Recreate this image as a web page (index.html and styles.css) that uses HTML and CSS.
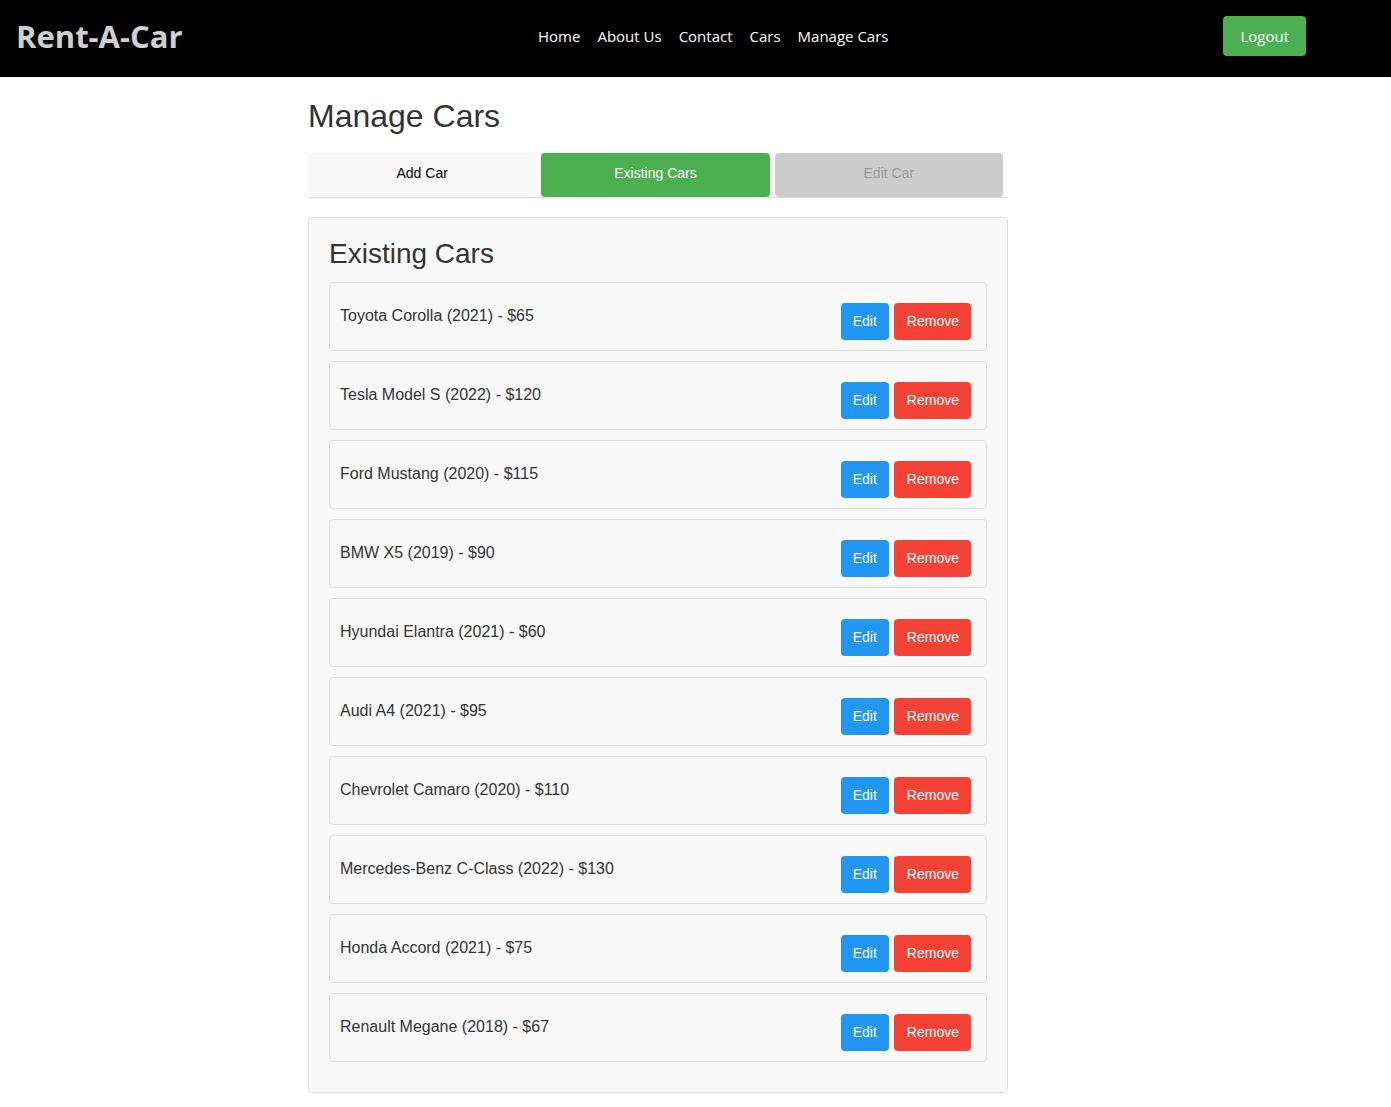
FILE: index.html
```html
<!DOCTYPE html>
<html lang="en">
<head>
<meta charset="utf-8">
<title>Rent-A-Car - Manage Cars</title>
<link rel="stylesheet" href="styles.css">
</head>
<body>
<header class="site-header">
  <div class="logo">Rent-A-Car</div>
  <nav class="main-nav">
    <a href="#">Home</a>
    <a href="#">About Us</a>
    <a href="#">Contact</a>
    <a href="#">Cars</a>
    <a href="#">Manage Cars</a>
  </nav>
  <button class="logout-btn">Logout</button>
</header>

<main class="container">
  <h1 class="page-title">Manage Cars</h1>
  <div class="tabs">
    <button class="tab">Add Car</button>
    <button class="tab tab-active">Existing Cars</button>
    <button class="tab tab-disabled">Edit Car</button>
  </div>

  <section class="panel">
    <h2 class="panel-title">Existing Cars</h2>
    <div class="car-item"><span class="car-name">Toyota Corolla (2021) - $65</span><div class="actions"><button class="btn btn-edit">Edit</button><button class="btn btn-remove">Remove</button></div></div>
    <div class="car-item"><span class="car-name">Tesla Model S (2022) - $120</span><div class="actions"><button class="btn btn-edit">Edit</button><button class="btn btn-remove">Remove</button></div></div>
    <div class="car-item"><span class="car-name">Ford Mustang (2020) - $115</span><div class="actions"><button class="btn btn-edit">Edit</button><button class="btn btn-remove">Remove</button></div></div>
    <div class="car-item"><span class="car-name">BMW X5 (2019) - $90</span><div class="actions"><button class="btn btn-edit">Edit</button><button class="btn btn-remove">Remove</button></div></div>
    <div class="car-item"><span class="car-name">Hyundai Elantra (2021) - $60</span><div class="actions"><button class="btn btn-edit">Edit</button><button class="btn btn-remove">Remove</button></div></div>
    <div class="car-item"><span class="car-name">Audi A4 (2021) - $95</span><div class="actions"><button class="btn btn-edit">Edit</button><button class="btn btn-remove">Remove</button></div></div>
    <div class="car-item"><span class="car-name">Chevrolet Camaro (2020) - $110</span><div class="actions"><button class="btn btn-edit">Edit</button><button class="btn btn-remove">Remove</button></div></div>
    <div class="car-item"><span class="car-name">Mercedes-Benz C-Class (2022) - $130</span><div class="actions"><button class="btn btn-edit">Edit</button><button class="btn btn-remove">Remove</button></div></div>
    <div class="car-item"><span class="car-name">Honda Accord (2021) - $75</span><div class="actions"><button class="btn btn-edit">Edit</button><button class="btn btn-remove">Remove</button></div></div>
    <div class="car-item"><span class="car-name">Renault Megane (2018) - $67</span><div class="actions"><button class="btn btn-edit">Edit</button><button class="btn btn-remove">Remove</button></div></div>
  </section>
</main>
</body>
</html>
```

FILE: styles.css
```css
* {
  box-sizing: border-box;
}

body {
  margin: 0;
  background: #fff;
  font-family: "Liberation Sans", Arial, sans-serif;
  color: #333;
}

.site-header {
  height: 77px;
  background: #000;
  display: flex;
  align-items: center;
  padding-left: 17px;
}

.logo {
  width: 522px;
  font-family: "Open Sans", "Noto Sans", sans-serif;
  font-weight: 700;
  font-size: 31px;
  color: #d0d0d0;
  line-height: 1;
  padding-bottom: 4px;
  margin-left: -1px;
}

.main-nav {
  display: flex;
  gap: 17px;
  padding-bottom: 5px;
}

.main-nav a {
  font-family: "Open Sans", "Noto Sans", sans-serif;
  font-size: 15px;
  color: #fff;
  text-decoration: none;
}

.logout-btn {
  margin-left: auto;
  margin-right: 85px;
  margin-bottom: 5px;
  height: 40px;
  padding: 0 17px;
  background: #4caf50;
  color: #fff;
  border: none;
  border-radius: 4px;
  font-family: "Open Sans", "Noto Sans", sans-serif;
  font-size: 15px;
}

.container {
  max-width: 700px;
  margin-left: 308px;
  padding-bottom: 14px;
}

.page-title {
  font-size: 32px;
  font-weight: 400;
  color: #333;
  margin: 21px 0 18px;
  line-height: 37px;
}

.tabs {
  display: flex;
  border-bottom: 1px solid #ddd;
  margin-bottom: 19px;
}

.tab {
  flex: 1;
  margin-right: 5px;
  height: 44px;
  padding: 0 0 5px;
  border: none;
  border-radius: 4px;
  background: #f8f8f8;
  color: #000;
  font-family: "Liberation Sans", Arial, sans-serif;
  font-size: 14px;
}

.tab-active {
  background: #4caf50;
  color: #fff;
}

.tab-disabled {
  background: #ccc;
  color: #999;
}

.panel {
  background: #f8f8f8;
  border: 1px solid #ddd;
  border-radius: 4px;
  padding: 20px;
}

.panel-title {
  font-size: 28px;
  font-weight: 400;
  color: #333;
  margin: 0 0 12px;
  line-height: 32px;
}

.car-item {
  display: flex;
  align-items: center;
  justify-content: space-between;
  border: 1px solid #ddd;
  border-radius: 4px;
  padding: 10px;
  margin-bottom: 10px;
}

.car-name {
  font-size: 16px;
  line-height: 18px;
  color: #333;
  padding-bottom: 2px;
}

.actions {
  display: flex;
  gap: 5px;
  margin: 10px 5px 0 0;
}

.btn {
  height: 37px;
  padding: 0 12px 2px;
  border: none;
  border-radius: 4px;
  color: #fff;
  font-family: "Liberation Sans", Arial, sans-serif;
  font-size: 14px;
}

.btn-edit {
  background: #2196f3;
}

.btn-remove {
  background: #f44336;
  padding-left: 13px;
}
```
